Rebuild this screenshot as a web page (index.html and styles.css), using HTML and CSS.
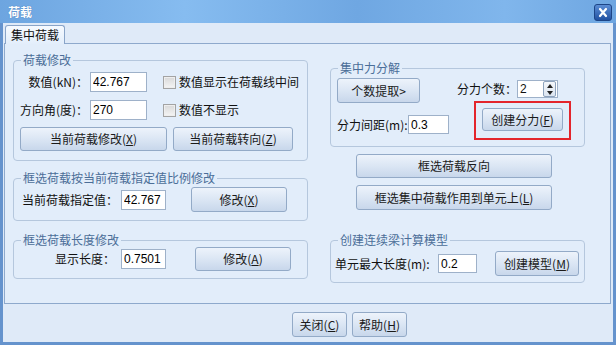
FILE: index.html
```html
<!DOCTYPE html>
<html lang="zh-CN">
<head>
    <meta charset="UTF-8">
    <title>荷载</title>
    <link rel="stylesheet" href="styles.css">
</head>
<body>

<div class="window">
    <div class="titlebar">
        <span class="title">荷载</span>
        <span class="close">
            <svg width="18" height="17" viewBox="0 0 18 17">
                <defs>
                    <linearGradient id="cg" x1="0" y1="0" x2="0" y2="1">
                        <stop offset="0" stop-color="#5d8fd6"/>
                        <stop offset="1" stop-color="#1f4f9f"/>
                    </linearGradient>
                </defs>
                <rect x="0.5" y="0.5" width="17" height="16" rx="2.5" fill="url(#cg)" stroke="#1d4586"/>
                <path d="M6 5 L12 12 M12 5 L6 12" stroke="#fff" stroke-width="2.2" stroke-linecap="round"/>
            </svg>
        </span>
    </div>

    <div class="tabs">
        <span class="tab">集中荷载</span>
    </div>

    <div class="panel">
        <!-- 左侧 -->
        <div class="col col-left">
            <fieldset class="group g-load">
                <legend>荷载修改</legend>
                <div class="row">
                    <label class="lbl lbl-load">数值(kN)：</label>
                    <input class="field f-load" type="text" value="42.767">
                    <span class="check"></span>
                    <span>数值显示在荷载线中间</span>
                </div>
                <div class="row r-angle">
                    <label class="lbl lbl-load">方向角(度)：</label>
                    <input class="field f-load" type="text" value="270">
                    <span class="check"></span>
                    <span>数值不显示</span>
                </div>
                <div class="row r-btns">
                    <button class="btn b-modify">当前荷载修改(<u>X</u>)</button>
                    <button class="btn b-turn">当前荷载转向(<u>Z</u>)</button>
                </div>
            </fieldset>

            <fieldset class="group g-scale">
                <legend>框选荷载按当前荷载指定值比例修改</legend>
                <div class="row">
                    <label class="lbl lbl-scale">当前荷载指定值：</label>
                    <input class="field f-small" type="text" value="42.767">
                    <button class="btn b-edit b-edit1">修改(<u>X</u>)</button>
                </div>
            </fieldset>

            <fieldset class="group g-length">
                <legend>框选荷载长度修改</legend>
                <div class="row">
                    <label class="lbl lbl-length">显示长度：</label>
                    <input class="field f-small" type="text" value="0.7501">
                    <button class="btn b-edit b-edit2">修改(<u>A</u>)</button>
                </div>
            </fieldset>
        </div>

        <!-- 右侧 -->
        <div class="col col-right">
            <fieldset class="group g-split">
                <legend>集中力分解</legend>
                <div class="split">
                    <div class="split-left">
                        <button class="btn b-count">个数提取&gt;</button>
                        <div class="row r-gap">
                            <label class="lbl lbl-gap">分力间距(m):</label>
                            <input class="field f-gap" type="text" value="0.3">
                        </div>
                    </div>
                    <div class="split-right">
                        <div class="row">
                            <label class="lbl">分力个数：</label>
                            <span class="spin">
                                <span class="spin-val">2</span>
                                <span class="spin-btns">
                                    <span class="arrow up"></span>
                                    <span class="arrow down"></span>
                                </span>
                            </span>
                        </div>
                        <div class="mark">
                            <button class="btn b-create">创建分力(<u>F</u>)</button>
                        </div>
                    </div>
                </div>
            </fieldset>

            <button class="btn b-wide b-reverse">框选荷载反向</button>
            <button class="btn b-wide b-apply">框选集中荷载作用到单元上(<u>L</u>)</button>

            <fieldset class="group g-model">
                <legend>创建连续梁计算模型</legend>
                <div class="row">
                    <label class="lbl lbl-model">单元最大长度(m):</label>
                    <input class="field f-model" type="text" value="0.2">
                    <button class="btn b-model">创建模型(<u>M</u>)</button>
                </div>
            </fieldset>
        </div>
    </div>

    <div class="footer">
        <button class="btn b-foot">关闭(<u>C</u>)</button>
        <button class="btn b-foot">帮助(<u>H</u>)</button>
    </div>
</div>

</body>
</html>
```

FILE: styles.css
```css
body {
    margin: 0;
    font-family: "Noto Sans CJK SC", sans-serif;
    font-size: 12px;
    line-height: 14px;
    color: #111;
}

.window {
    width: 616px;
    height: 345px;
    box-sizing: border-box;
    border: 3px solid #6593cd;
    border-top: 0;
    background-color: #dfeaf8;
    display: flex;
    flex-direction: column;
}

/* 标题栏 */
.titlebar {
    height: 23px;
    margin: 0 -3px;
    padding: 0 4px 0 8px;
    display: flex;
    align-items: center;
    background: linear-gradient(to right, #6da5e0, #86bcf0 30%, #6fa7e2 58%, #80b6ec 82%, #6ea6e1);
}
.title {
    color: #fff;
    font-weight: bold;
    text-shadow: 0 0 1px #3a6aa8;
}
.close {
    margin-left: auto;
    height: 17px;
    margin-top: 2px;
}

/* 选项卡 */
.tabs {
    height: 20px;
    display: flex;
    align-items: flex-end;
}
.tab {
    position: relative;
    z-index: 1;
    margin-left: 2px;
    margin-bottom: -1px;
    width: 58px;
    height: 18px;
    line-height: 18px;
    text-align: center;
    font-size: 12px;
    border: 1px solid #89a4c8;
    border-bottom: 0;
    border-radius: 3px 3px 0 0;
    background: linear-gradient(#f6faff, #e3eefb);
}

.panel {
    height: 261px;
    box-sizing: border-box;
    margin: 0 2px 0 1px;
    border: 1px solid #8ea9cc;
    background-color: #e2edfa;
    display: flex;
    gap: 22px;
    padding: 9px 0 0 8px;
}
.col {
    display: flex;
    flex-direction: column;
}
.col-left {
    width: 295px;
}
.col-right {
    width: 255px;
    margin-top: 8px;
}

/* 分组框 */
.group {
    margin: 0;
    padding: 0;
    border: 1px solid #b5c7dd;
    border-radius: 4px;
    min-width: 0;
}
.group legend {
    margin-left: 7px;
    padding: 0 2px;
    line-height: 14px;
    color: #4b6e98;
}
.g-load { padding: 5px 0 9px 0; }
.g-scale { margin-top: 10px; padding: 2px 0 8px 0; }
.g-length { margin-top: 12px; padding: 0 0 7px 0; }
.g-split { padding: 3px 0 6px 0; }
.g-model { margin-top: 23px; padding: 4px 0 6px 0; }

.row {
    display: flex;
    align-items: center;
}
.r-angle { margin-top: 8px; }
.r-btns { margin-top: 7px; }

.lbl {
    flex: none;
    white-space: nowrap;
}
.lbl-load {
    width: 74px;
    margin-right: 2px;
    text-align: right;
}
.lbl-scale {
    width: 99px;
    margin-left: 8px;
}
.lbl-length {
    width: 101px;
    margin-right: 6px;
    text-align: right;
}
.lbl-gap { width: 71px; }
.lbl-model {
    width: 103px;
    margin-left: 4px;
}

/* 输入框 */
.field {
    box-sizing: border-box;
    height: 20px;
    padding: 0 2px;
    border: 1px solid #9eb1c9;
    background: #fff;
    font-family: "Liberation Sans", Arial, sans-serif;
    font-size: 12px;
    color: #000;
    outline: none;
}
.f-load { width: 57px; }
.f-small { width: 45px; }
.f-gap { width: 41px; height: 19px; }
.f-model { width: 39px; height: 19px; }

.check {
    flex: none;
    box-sizing: border-box;
    width: 13px;
    height: 13px;
    margin: 0 3px 0 16px;
    border: 1px solid #a3a3a3;
    background: linear-gradient(#d8d8d8, #f5f5f5);
    box-shadow: inset 0 0 0 1px #eeeeee;
}

/* 按钮 */
.btn {
    box-sizing: border-box;
    height: 24px;
    padding: 0;
    border: 1px solid #93aac7;
    border-radius: 3px;
    background: linear-gradient(#edf3fb, #dbe6f4 50%, #c8d7eb);
    font-family: "Noto Sans CJK SC", sans-serif;
    font-size: 12px;
    line-height: 14px;
    color: #1a1a1a;
    flex: none;
}
.btn u {
    text-underline-offset: 1px;
}
.b-modify { width: 147px; margin-left: 6px; }
.b-turn { width: 120px; margin-left: 6px; }
.b-edit { width: 96px; }
.b-edit1 { height: 25px; margin-left: 25px; }
.b-edit2 { margin-left: 29px; }
.b-count { width: 83px; height: 25px; }
.b-create { width: 81px; height: 23px; }
.b-wide {
    width: 196px;
    margin-left: 26px;
    margin-top: 7px;
}
.b-apply { height: 25px; }
.b-model { width: 84px; height: 25px; margin-left: 18px; }
.b-foot { width: 55px; height: 25px; }

/* 集中力分解 */
.split {
    display: flex;
    margin-left: 6px;
}
.split-left {
    display: flex;
    flex-direction: column;
    align-items: flex-start;
}
.r-gap { margin-top: 12px; }
.split-right {
    margin-left: 8px;
    display: flex;
    flex-direction: column;
    align-items: flex-start;
}
.split-right .row { margin-top: 2px; }

.spin {
    box-sizing: border-box;
    width: 41px;
    height: 18px;
    border: 1px solid #9eb1c9;
    background: #fff;
    display: flex;
    align-items: center;
    font-family: "Liberation Sans", Arial, sans-serif;
    padding-left: 2px;
}
.spin-val { flex: 1; }
.spin-btns {
    width: 11px;
    height: 14px;
    margin-right: 1px;
    border: 1px solid #8ea3bd;
    border-radius: 2px;
    background: linear-gradient(#f4f7fb, #dce5f0);
    display: flex;
    flex-direction: column;
    align-items: center;
    justify-content: space-around;
}
.arrow {
    width: 0;
    height: 0;
    border-left: 3px solid transparent;
    border-right: 3px solid transparent;
}
.arrow.up { border-bottom: 4px solid #222; }
.arrow.down { border-top: 4px solid #222; }

/* 红色标记框 */
.mark {
    margin: 3px 0 0 17px;
    padding: 5px 6px 7px 6px;
    border: 2px solid #e3252c;
}

.footer {
    display: flex;
    gap: 5px;
    padding: 8px 0 0 289px;
}
```
